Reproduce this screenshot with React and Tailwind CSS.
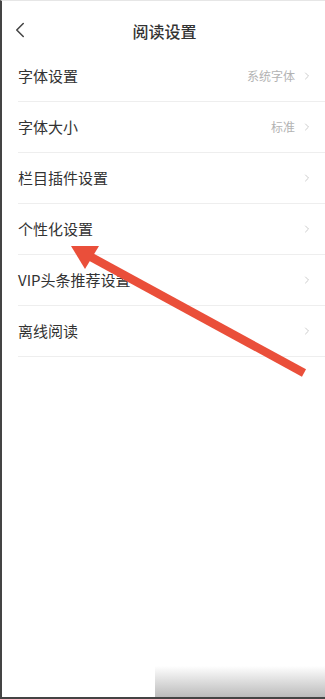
import { ChevronLeft, ChevronRight } from "lucide-react";

const rows = [
  { label: "字体设置", value: "系统字体" },
  { label: "字体大小", value: "标准" },
  { label: "栏目插件设置" },
  { label: "个性化设置" },
  { label: "VIP头条推荐设置" },
  { label: "离线阅读" },
];

function Arrow() {
  return (
    <svg className="pointer-events-none absolute inset-0" width="325" height="699" viewBox="0 0 325 699">
      <line x1="89" y1="256" x2="302" y2="372" stroke="#ea4f3a" strokeWidth="8.5" />
      <polygon points="69,245 97,245 83,268" fill="#ea4f3a" />
    </svg>
  );
}

export default function App() {
  return (
    <main
      className="relative h-[699px] w-[325px] overflow-hidden border-t border-l-2 border-b-2 border-t-[#e6e6e6] border-l-[#444] border-b-[#444] bg-white"
      style={{ fontFamily: '"Noto Sans CJK SC", "Noto Sans", sans-serif' }}
    >
      <header className="relative flex h-[50px] items-center justify-center">
        <button className="absolute left-[5px] top-[16px] text-[#444]">
          <ChevronLeft size={26} strokeWidth={1.4} />
        </button>
        <h1 className="pl-[2px] pt-[9px] text-[16px] font-medium text-[#333]">阅读设置</h1>
      </header>

      <ul className="pl-[16px]">
        {rows.map((row) => (
          <li key={row.label} className="flex h-[51px] items-center border-b border-[#eeeeee] pr-[12px]">
            <span className="flex-1 text-[15px] text-[#333]">{row.label}</span>
            {row.value ? <span className="mr-[6px] text-[12px] text-[#b3b3b3]">{row.value}</span> : null}
            <ChevronRight size={12} strokeWidth={1.5} className="text-[#bbbbbb]" />
          </li>
        ))}
      </ul>

      <Arrow />

      <div className="pointer-events-none absolute bottom-0 right-0 h-[62px] w-[170px] bg-gradient-to-b from-white via-white/60 to-[#8f8f8f] opacity-60" />
    </main>
  );
}
